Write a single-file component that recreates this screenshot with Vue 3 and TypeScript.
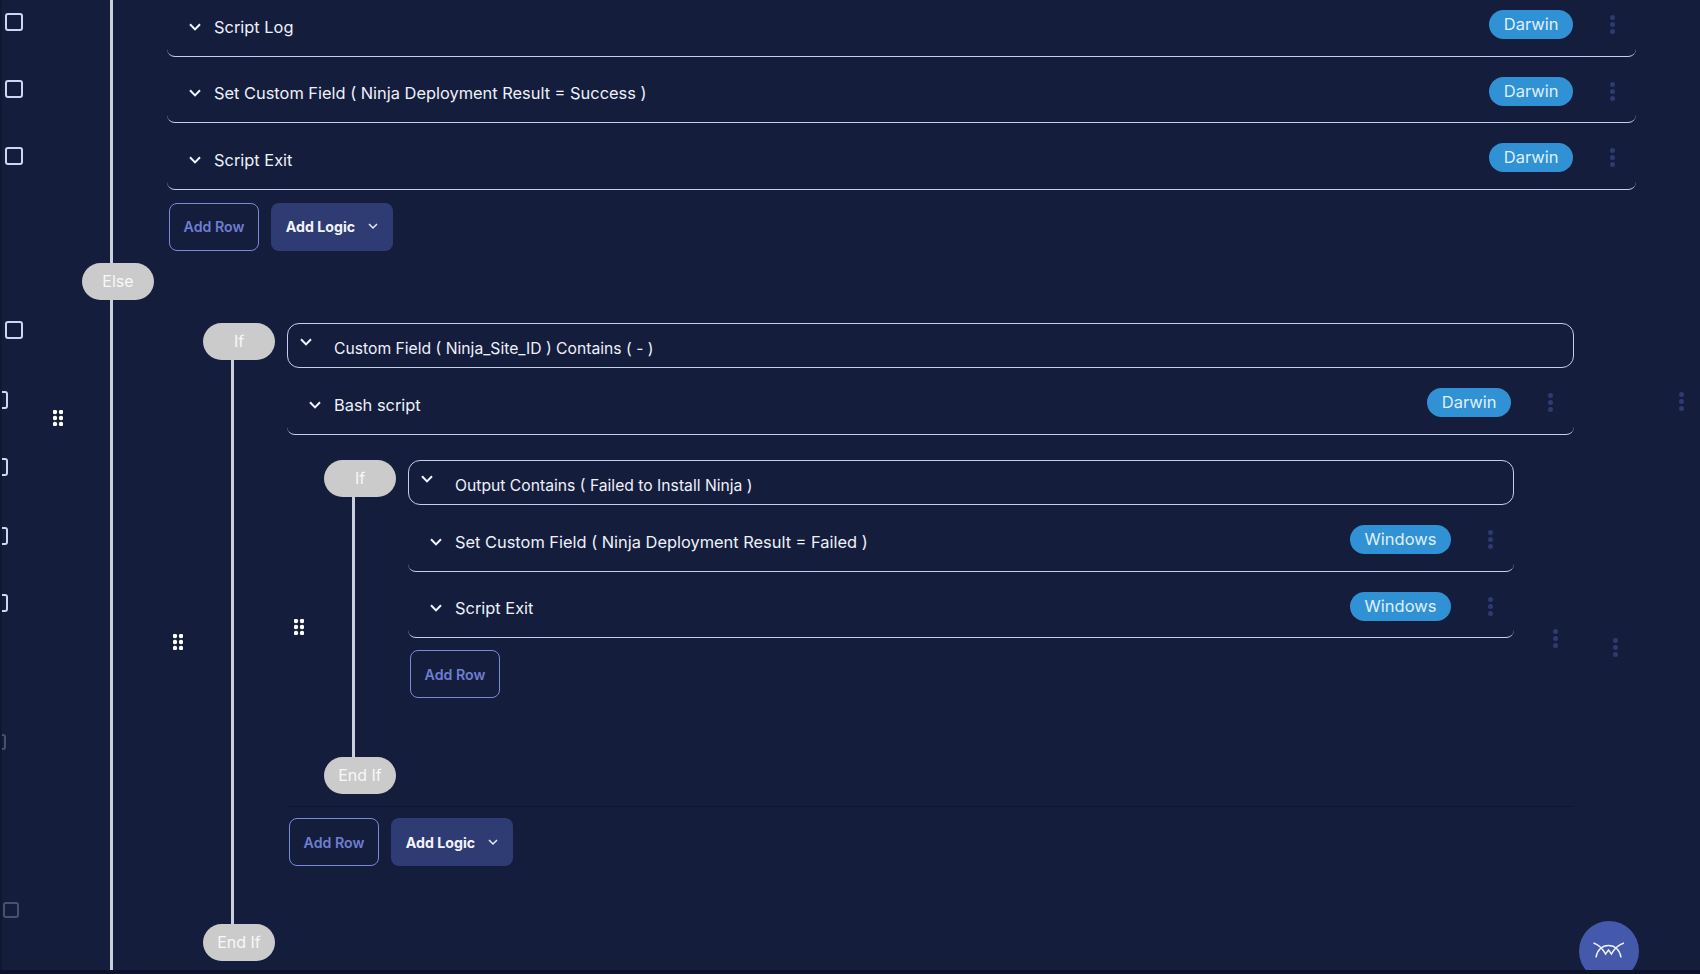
<script setup lang="ts">
interface RowItem { label: string; os: string }

const topRows: RowItem[] = [
  { label: 'Script Log', os: 'Darwin' },
  { label: 'Set Custom Field ( Ninja Deployment Result = Success )', os: 'Darwin' },
  { label: 'Script Exit', os: 'Darwin' },
]
const bashRows: RowItem[] = [{ label: 'Bash script', os: 'Darwin' }]
const innerRows: RowItem[] = [
  { label: 'Set Custom Field ( Ninja Deployment Result = Failed )', os: 'Windows' },
  { label: 'Script Exit', os: 'Windows' },
]
const checks = [
  { gap: 13, cls: '' },
  { gap: 49, cls: '' },
  { gap: 49, cls: '' },
  { gap: 156, cls: '' },
  { gap: 52, cls: 'clip' },
  { gap: 49, cls: 'clip' },
  { gap: 51, cls: 'clip' },
  { gap: 49, cls: 'clip' },
  { gap: 122, cls: 'clip faint' },
  { gap: 152, cls: 'faint last' },
]
</script>

<template>
  <div class="page">
    <div class="canvas">
      <aside class="gutter">
        <span
          v-for="(c, i) in checks"
          :key="i"
          class="check"
          :class="c.cls"
          :style="{ marginTop: c.gap + 'px' }"
        ></span>
      </aside>

      <main class="tree">
        <svg class="handle handle-root" viewBox="0 0 10 16"><g fill="#fff"><circle cx="2" cy="2" r="2.200"/><circle cx="8" cy="2" r="2.200"/><circle cx="2" cy="8" r="2.200"/><circle cx="8" cy="8" r="2.200"/><circle cx="2" cy="14" r="2.200"/><circle cx="8" cy="14" r="2.200"/></g></svg>
        <span class="dots dots-root"><i></i><i></i><i></i></span>

        <div class="row" v-for="r in topRows" :key="r.label">
          <svg class="chev" viewBox="0 0 12 8"><path d="M1 1.2 6 6.4 11 1.2" /></svg>
          <span class="label">{{ r.label }}</span>
          <span class="badge">{{ r.os }}</span>
          <span class="dots"><i></i><i></i><i></i></span>
        </div>
        <div class="actions">
          <button class="btn-row">Add Row</button>
          <button class="btn-logic">Add Logic
            <svg viewBox="0 0 10 7"><path d="M1 1 5 5 9 1" /></svg>
          </button>
        </div>

        <div class="pill pill-else">Else</div>

        <section class="logic outer">
          <svg class="handle" viewBox="0 0 10 16"><g fill="#fff"><circle cx="2" cy="2" r="2.200"/><circle cx="8" cy="2" r="2.200"/><circle cx="2" cy="8" r="2.200"/><circle cx="8" cy="8" r="2.200"/><circle cx="2" cy="14" r="2.200"/><circle cx="8" cy="14" r="2.200"/></g></svg>
          <span class="dots dots-side"><i></i><i></i><i></i></span>
          <div class="rail">
            <div class="pill">If</div>
            <div class="rail-line"></div>
            <div class="pill">End If</div>
          </div>
          <div class="body">
            <div class="cond">
              <svg class="chev" viewBox="0 0 12 8"><path d="M1 1.2 6 6.4 11 1.2" /></svg>
              <span class="label">Custom Field ( Ninja_Site_ID ) Contains ( - )</span>
            </div>
            <div class="row" v-for="r in bashRows" :key="r.label">
              <svg class="chev" viewBox="0 0 12 8"><path d="M1 1.2 6 6.4 11 1.2" /></svg>
              <span class="label">{{ r.label }}</span>
              <span class="badge">{{ r.os }}</span>
              <span class="dots"><i></i><i></i><i></i></span>
            </div>

            <section class="logic inner">
              <svg class="handle" viewBox="0 0 10 16"><g fill="#fff"><circle cx="2" cy="2" r="2.200"/><circle cx="8" cy="2" r="2.200"/><circle cx="2" cy="8" r="2.200"/><circle cx="8" cy="8" r="2.200"/><circle cx="2" cy="14" r="2.200"/><circle cx="8" cy="14" r="2.200"/></g></svg>
              <span class="dots dots-side"><i></i><i></i><i></i></span>
              <div class="rail">
                <div class="pill">If</div>
                <div class="rail-line"></div>
                <div class="pill">End If</div>
              </div>
              <div class="body">
                <div class="cond">
                  <svg class="chev" viewBox="0 0 12 8"><path d="M1 1.2 6 6.4 11 1.2" /></svg>
                  <span class="label">Output Contains ( Failed to Install Ninja )</span>
                </div>
                <div class="row" v-for="r in innerRows" :key="r.label">
                  <svg class="chev" viewBox="0 0 12 8"><path d="M1 1.2 6 6.4 11 1.2" /></svg>
                  <span class="label">{{ r.label }}</span>
                  <span class="badge">{{ r.os }}</span>
                  <span class="dots"><i></i><i></i><i></i></span>
                </div>
                <div class="actions inner-actions">
                  <button class="btn-row">Add Row</button>
                </div>
              </div>
            </section>

            <div class="divider"></div>
            <div class="actions tight">
              <button class="btn-row">Add Row</button>
              <button class="btn-logic">Add Logic
                <svg viewBox="0 0 10 7"><path d="M1 1 5 5 9 1" /></svg>
              </button>
            </div>
          </div>
        </section>
      </main>

      <button class="fab" aria-label="Assistant">
        <svg viewBox="0 0 32 18">
          <path d="M0.500 1C5 2.500 9 5.500 12.500 12L15.500 8L18.500 12C22 5.500 26 2.500 31 1" />
          <path d="M3 15.500C4 8 9 3.500 15.500 3.500C22 3.500 27 8 28 15.500" />
        </svg>
      </button>
    </div>
    <div class="strip"></div>
  </div>
</template>

<style>
html, body { margin: 0; background: #141d3b; }
</style>

<style scoped>
.page {
  width: 1700px;
  height: 974px;
  display: flex;
  flex-direction: column;
  overflow: hidden;
  background: #141d3b;
  font-family: Inter, "Liberation Sans", sans-serif;
}
.canvas {
  flex: 1;
  min-height: 0;
  display: flex;
  position: relative;
  overflow: hidden;
}
.strip { height: 4px; background: #0d1429; }

.gutter {
  width: 110px;
  flex: none;
  box-sizing: border-box;
  display: flex;
  flex-direction: column;
  align-items: flex-start;
  padding-left: 5px;
  position: relative;
}
.gutter::before {
  content: "";
  position: absolute;
  left: 0;
  top: 0;
  bottom: 0;
  width: 2px;
  background: #101731;
  z-index: 1;
}
.check {
  width: 18px;
  height: 18px;
  box-sizing: border-box;
  border: 2px solid #cdd6f2;
  border-radius: 3px;
  flex: none;
}
.check.clip { margin-left: -15px; }
.check.faint {
  width: 16px;
  height: 16px;
  border-color: #47516f;
}
.check.last { margin-left: -2px; }

.tree {
  flex: 1;
  min-width: 0;
  box-sizing: border-box;
  position: relative;
  border-left: 3px solid #c9cfdb;
  padding: 0 64px 0 54px;
  height: 974px;
}
.row {
  height: 66.500px;
  box-sizing: border-box;
  display: flex;
  align-items: center;
  padding: 3.500px 0 0 22px;
  border-bottom: 1px solid #c6cfea;
  border-radius: 0 0 8px 8px;
}
.tree > .row:first-of-type { margin-top: -9.600px; }

.chev {
  width: 12px;
  height: 8px;
  flex: none;
  fill: none;
  stroke: #f2f5ff;
  stroke-width: 2;
  margin-right: 13px;
  position: relative;
  top: 2px;
}
.label {
  color: #eef1fb;
  font-size: 16.400px;
  line-height: 24px;
  white-space: nowrap;
  position: relative;
  top: 2px;
}
.badge {
  margin-left: auto;
  height: 29px;
  box-sizing: border-box;
  padding: 0 14.500px;
  border-radius: 15px;
  background: #3191d5;
  color: #dff0fc;
  font-size: 16.500px;
  line-height: 29px;
}
.dots {
  display: flex;
  flex-direction: column;
  gap: 2px;
  width: 5px;
  margin: 0 21px 0 37px;
}
.dots i {
  width: 5px;
  height: 5px;
  border-radius: 50%;
  background: #2f3a72;
}
.dots-side {
  position: absolute;
  right: -44px;
  margin: 0;
}
.outer > .dots-side { top: 315px; }
.inner > .dots-side { top: 169px; }
.dots-root {
  position: absolute;
  left: 1566px;
  top: 392px;
  margin: 0;
}

.actions {
  display: flex;
  gap: 12px;
  margin: 13px 0 0 2px;
}
.actions.inner-actions { margin-top: 12px; }
.actions.tight { margin-top: 11px; }
.btn-row,
.btn-logic {
  height: 48px;
  box-sizing: border-box;
  border-radius: 8px;
  font-family: inherit;
  font-size: 14.200px;
  padding: 0;
  display: flex;
  align-items: center;
  justify-content: center;
}
.btn-row {
  width: 90px;
  background: transparent;
  border: 1px solid #7989dc;
  color: #6e7fd2;
  font-weight: 600;
}
.btn-logic {
  width: 122px;
  background: #2f3b73;
  border: 0;
  color: #f2f4fc;
  font-weight: 700;
  gap: 13px;
}
.btn-logic svg {
  width: 10px;
  height: 7px;
  fill: none;
  stroke: #e8ebf8;
  stroke-width: 1.500;
}

.pill {
  width: 72px;
  height: 37px;
  flex: none;
  border-radius: 19px;
  background: #cbcbcb;
  color: #f8f8f8;
  font-size: 16px;
  line-height: 37px;
  text-align: center;
}
.pill-else {
  margin: 12px 0 0 -85px;
  position: relative;
}

.logic {
  display: flex;
  gap: 12px;
  position: relative;
}
.logic.outer { margin: 23px 62px 0 36px; }
.logic.inner { margin: 25px 60px 0 37px; }
.rail {
  width: 72px;
  flex: none;
  display: flex;
  flex-direction: column;
}
.rail-line {
  flex: 1;
  width: 3px;
  margin-left: 28px;
  background: #c9cfdb;
}
.body {
  flex: 1;
  min-width: 0;
}
.outer > .body { padding-bottom: 95px; }
.inner > .body { padding-bottom: 96px; }
.cond {
  height: 45.500px;
  box-sizing: border-box;
  border: 1px solid #c6cfea;
  border-radius: 12px;
  display: flex;
  align-items: center;
  padding-left: 12px;
}
.cond .chev {
  margin-right: 22px;
  top: -3.500px;
}
.cond .label {
  top: 3.500px;
  font-size: 15.700px;
}
.divider {
  height: 1px;
  background: #0f1630;
  margin-top: 12px;
}
.handle {
  position: absolute;
  left: -30px;
  top: calc(50% - 8px);
  width: 10px;
  height: 16px;
}
.handle-root {
  left: -60px;
  top: 410px;
}
.fab {
  position: absolute;
  left: 1579px;
  top: 921px;
  width: 60px;
  height: 60px;
  border: 0;
  border-radius: 50%;
  background: #4459ab;
  padding: 0;
  display: flex;
  align-items: center;
  justify-content: center;
}
.fab svg {
  width: 32px;
  height: 18px;
  fill: none;
  stroke: #eef1fb;
  stroke-width: 1.500;
  overflow: visible;
}
</style>
